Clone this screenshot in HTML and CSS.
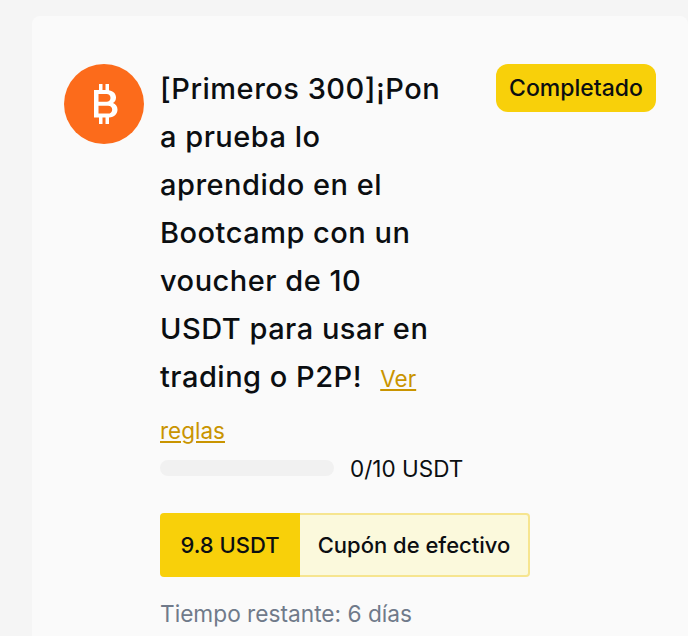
FILE: index.html
```html
<!DOCTYPE html>
<html lang="es">
<head>
    <meta charset="UTF-8">
    <meta name="viewport" content="width=device-width, initial-scale=1.0">
    <title>Bootcamp voucher</title>
    <link rel="stylesheet" href="styles.css">
</head>
<body>
    <div class="card">
        <div class="coin">
            <svg width="40" height="40" viewBox="0 0 40 40" fill="none">
                <path d="M10 6h5v-6h3.500v6h3v-6h3.500v6.300c4.500.8 7 3.500 7 7.200 0 2.400-1 4.400-3 5.600 2.700 1.200 4.500 3.500 4.500 6.400 0 4.400-3 7.500-8.500 8.100V40h-3.500v-6.400h-3V40H15v-6.400h-5z" fill="#fff"/>
                <path d="M14.500 10v7.800h8c2.400 0 4-1.600 4-3.900s-1.600-3.900-4-3.900zM14.500 21.800v7.800h9.500c2.500 0 4.200-1.500 4.200-3.900s-1.700-3.900-4.200-3.900z" fill="#fc6b1b"/>
            </svg>
        </div>
        <div class="info">
            <h2 class="title">[Primeros 300]¡Pon a prueba lo aprendido en el Bootcamp con un voucher de 10 USDT para usar en trading o P2P! <a class="rules" href="#">Ver reglas</a></h2>
            <div class="progress">
                <div class="bar"></div>
                <span class="amount">0/10 USDT</span>
            </div>
            <div class="voucher">
                <div class="value">9.8 USDT</div>
                <div class="kind">Cupón de efectivo</div>
            </div>
            <p class="time">Tiempo restante: 6 días</p>
        </div>
        <div class="badge">Completado</div>
    </div>
</body>
</html>
```
FILE: styles.css
```css
html, body {
    height: 100%;
}

body {
    margin: 0;
    padding: 16px 0 0 32px;
    box-sizing: border-box;
    overflow: hidden;
    background-color: #f5f5f5;
    color: #0b0e11;
    font-family: Inter, "Liberation Sans", sans-serif;
}

.card {
    display: flex;
    align-items: flex-start;
    height: 620px;
    padding: 48px 32px 0;
    box-sizing: border-box;
    overflow: hidden;
    background-color: #fafafa;
    border-radius: 8px 8px 0 0;
}

.coin {
    display: flex;
    align-items: center;
    justify-content: center;
    flex: none;
    width: 80px;
    height: 80px;
    margin-right: 16px;
    border-radius: 50%;
    background-color: #fc6b1b;
}

.info {
    flex: none;
    width: 288px;
    margin-right: 48px;
}

.title {
    margin: 0;
    padding-top: 1px;
    font-size: 29px;
    font-weight: 500;
    letter-spacing: 0.5px;
    line-height: 48px;
}

.rules {
    margin-left: 10px;
    font-size: 22.5px;
    font-weight: 400;
    letter-spacing: 0;
    line-height: 52px;
    color: #c99400;
}

.progress {
    display: flex;
    align-items: center;
    gap: 16px;
    height: 22px;
    white-space: nowrap;
}

.bar {
    flex: none;
    width: 174px;
    height: 16px;
    border-radius: 8px;
    background-color: #f1f1f1;
}

.amount {
    font-size: 22.5px;
}

.voucher {
    display: flex;
    width: 370px;
    height: 64px;
    margin-top: 34px;
    font-size: 22px;
    font-weight: 500;
    line-height: 64px;
    white-space: nowrap;
}

.value {
    flex: none;
    width: 140px;
    text-align: center;
    background-color: #f8d00a;
    border-radius: 4px 0 0 4px;
}

.kind {
    flex: 1;
    text-align: center;
    line-height: 60px;
    background-color: #fbf9dc;
    border: 2px solid #f6e58f;
    border-left: none;
    border-radius: 0 4px 4px 0;
}

.time {
    margin: 21px 0 0;
    font-size: 22.7px;
    line-height: 32px;
    color: #707a8a;
    white-space: nowrap;
}

.badge {
    flex: none;
    width: 160px;
    height: 48px;
    border-radius: 12px;
    background-color: #f8d00a;
    font-size: 23px;
    font-weight: 500;
    line-height: 48px;
    text-align: center;
}
```
